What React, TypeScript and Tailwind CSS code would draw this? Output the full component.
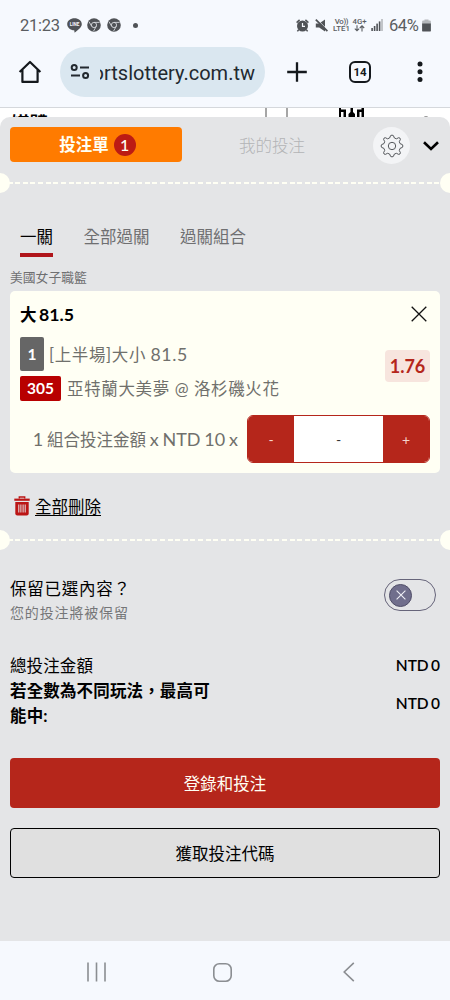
import React, { useState } from 'react';

const tabs = ['一關', '全部過關', '過關組合'];

// Dashed ticket tear line with a notch at each side
function TearLine() {
  return (
    <div className="relative h-5 flex items-center overflow-hidden">
      <div className="w-full h-[2.5px] bg-[repeating-linear-gradient(90deg,#fffff4_0px,#fffff4_5px,transparent_5px,transparent_7.62px)]" />
      <div className="absolute -left-[10px] top-0 size-5 rounded-full bg-[#fffff4]" />
      <div className="absolute -right-[10px] top-0 size-5 rounded-full bg-[#fffff4]" />
    </div>
  );
}

function ChromeIcon() {
  return (
    <svg width="14" height="14" viewBox="0 0 14 14" fill="none">
      <circle cx="7" cy="7" r="6.8" fill="#505357" />
      <circle cx="7" cy="7" r="2.6" stroke="#d5d8dc" strokeWidth="0.9" />
      <path d="M7 4.4H12.6M4.7 8.3L2 3.7M9.3 8.3L6.6 13" stroke="#d5d8dc" strokeWidth="0.9" />
    </svg>
  );
}

function StatusBar() {
  return (
    <div className="h-[47px] pt-[3px] pl-5 pr-[19px] flex items-center text-[#5a5d61] font-[Roboto,sans-serif]">
      <span className="text-[16.5px] w-[41px] mr-[6px] tracking-[-0.25px]">21:23</span>
      <svg className="mr-[5px]" width="15" height="15" viewBox="0 0 15 15">
        <path d="M7.5 0.3C11.5 0.3 14.8 2.9 14.8 6.2C14.8 9.4 10.5 12.3 7.8 14.6C7.3 14.9 7.6 13 7.2 12.3C3.3 12 0.2 9.4 0.2 6.2C0.2 2.9 3.5 0.3 7.5 0.3Z" fill="#505357" />
        <text x="7.5" y="8.1" textAnchor="middle" fontSize="4.6" fontWeight="bold" fontFamily="Roboto" fill="#f6f9fe">LINE</text>
      </svg>
      <ChromeIcon />
      <div className="w-[6px]" />
      <ChromeIcon />
      <div className="ml-[12px] size-[5px] rounded-full bg-[#505357]" />
      {/* right side */}
      <svg className="ml-auto mr-[6px]" width="13" height="13" viewBox="0 0 13 13" fill="none">
        <circle cx="6.5" cy="7" r="4.5" stroke="#505357" strokeWidth="2" fill="#505357" />
        <path d="M0.6 3.6L3.6 0.9M12.4 3.6L9.4 0.9M2.7 10.6L1.4 12.4M10.3 10.6L11.6 12.4" stroke="#505357" strokeWidth="1.5" />
        <path d="M6.5 4V7.3H9" stroke="#f6f9fe" strokeWidth="1.2" />
      </svg>
      <svg className="mr-[5px]" width="13" height="13" viewBox="0 0 13 13">
        <path d="M0.8 4.5H4.2L10 0.5V12.5L4.2 8.5H0.8Z" fill="#505357" />
        <path d="M1.8 0.2L12.8 11.2" stroke="#f6f9fe" strokeWidth="1" />
        <path d="M0.8 0.6L12.4 12.2" stroke="#505357" strokeWidth="1.7" />
      </svg>
      <div className="w-[17px] mr-[2px] text-[7.8px] leading-[7px] font-medium text-center whitespace-nowrap">
        <div className="tracking-[-0.3px]">Vo))</div>
        <div>LTE1</div>
      </div>
      <div className="w-[15px] mr-[4px] flex flex-col items-center text-[7.8px] leading-[7px] font-medium">
        <div>4G+</div>
        <svg width="11" height="7" viewBox="0 0 11 7" fill="none" stroke="#5a5d61" strokeWidth="1.1">
          <path d="M3 0.3V5.6M0.8 3.6L3 5.8L5.2 3.6M8 6.4V1M5.8 3L8 0.8L10.2 3" />
        </svg>
      </div>
      <svg className="mr-[6px]" width="12" height="12" viewBox="0 0 12 12" fill="#505357">
        <rect x="0.3" y="9" width="1.6" height="3" />
        <rect x="2.8" y="7" width="1.6" height="5" />
        <rect x="5.3" y="4.6" width="1.6" height="7.4" />
        <rect x="7.8" y="2.4" width="1.6" height="9.6" />
        <rect x="10.2" y="0" width="1.6" height="12" fill="#b5b8bc" />
      </svg>
      <span className="text-[16.5px] w-[31px] mr-[2px] tracking-[-0.4px]">64%</span>
      <svg width="9" height="13" viewBox="0 0 9 13">
        <path d="M2.5 0.4H6.5V1.6H7.8Q8.9 1.6 8.9 2.7V5H0.1V2.7Q0.1 1.6 1.2 1.6H2.5Z" fill="#b5b8bc" />
        <path d="M0.1 4.6H8.9V11.4Q8.9 12.6 7.7 12.6H1.3Q0.1 12.6 0.1 11.4Z" fill="#505357" />
      </svg>
    </div>
  );
}

function AddressBar() {
  return (
    <div className="h-[61px] flex items-start border-b border-[#d5d8dc]">
      <svg className="ml-[18px] mt-[13px]" width="24" height="24" viewBox="0 0 24 24" fill="none" stroke="#15191d" strokeWidth="2.2">
        <path d="M1.6 12L12 2L22.4 12M4.4 9.8V21.9H19.6V9.8" strokeLinejoin="round" />
      </svg>
      <div className="ml-[18px] w-[205px] h-[50px] rounded-full bg-[#dae7f0] flex items-center">
        <svg className="ml-[10px]" width="20" height="17" viewBox="0 0 20 17" fill="none" stroke="#22292f" strokeWidth="2">
          <circle cx="4.2" cy="3.5" r="2.5" />
          <path d="M10 3.5H19M1 11.6H10" />
          <circle cx="15.6" cy="11.6" r="2.5" />
        </svg>
        <div className="ml-[10px] w-[155px] pt-[3px] overflow-hidden flex justify-end text-[20px] text-[#22292f] font-[Roboto,sans-serif] whitespace-nowrap">
          <span>ortslottery.com.tw</span>
        </div>
      </div>
      <svg className="ml-[22px] mt-[15px]" width="20" height="20" viewBox="0 0 20 20" stroke="#15191d" strokeWidth="2.3">
        <path d="M10 0.2V19.8M0.2 10H19.8" />
      </svg>
      <div className="ml-[42px] mt-[14px] w-[22px] h-[22px] rounded-[6px] border-[2px] border-[#15191d] flex items-center justify-center text-[11.5px] leading-[18px] font-bold text-[#15191d] font-[Roboto,sans-serif]">14</div>
      <svg className="ml-[46px] mt-[14px]" width="6" height="22" viewBox="0 0 6 22" fill="#15191d">
        <circle cx="3" cy="3" r="2.5" />
        <circle cx="3" cy="10.7" r="2.5" />
        <circle cx="3" cy="18.4" r="2.5" />
      </svg>
    </div>
  );
}

export default function App() {
  const [activeTab, setActiveTab] = useState('一關');
  const [keep, setKeep] = useState(false);

  return (
    <div className="w-[450px] h-[1000px] overflow-hidden flex flex-col bg-[#f6f9fe] text-black text-[16.5px] leading-[25px] font-[Lato,'Noto_Sans_CJK_TC',sans-serif]">
      <StatusBar />
      <AddressBar />

      {/* Betslip over the page behind */}
      <div className="h-[833px] relative bg-white">
        <div className="h-[24px] overflow-hidden flex pl-[11px]">
          <span className="font-bold text-[18.5px] leading-[18px] pt-[6px]">媒體</span>
          <div className="ml-[217px] w-[23px] h-[16px] border-x-[2px] border-[#a6a6a6]" />
          <svg className="ml-[51px]" width="25" height="16" viewBox="0 0 25 16">
            <path d="M0 0H2V1.5H7V10H4.5V4H2V10H0ZM18 1.5H22.5V0H25V10H22.5V4H20.5V10H18ZM11.5 0H14V4L16 6V10H9.5V6L11.5 4Z" />
          </svg>
          <svg className="ml-[58px]" width="8" height="12" viewBox="0 0 8 12" fill="none" stroke="#222" strokeWidth="1.4">
            <path d="M1 10.2Q4 8 7 10.2" />
          </svg>
        </div>

        <div className="absolute inset-x-0 top-[9px] bottom-0 rounded-t-[10px] bg-[#e4e5e7]">
          {/* Header */}
          <div className="h-[56px] pt-[10px] px-[10px] flex items-start">
            <button className="w-[172px] h-[35px] rounded-[4px] bg-[#ff7b00] text-[#fffff4] font-bold flex items-center justify-center gap-[5px] pl-[3px]">
              <span className="pt-[2px]">投注單</span>
              <span className="size-[22px] rounded-full bg-[#bc1b14] text-[16px] leading-[22px] font-medium text-center">1</span>
            </button>
            <button className="ml-[57px] h-[36px] pt-[2px] text-[#b3b4b6] font-light">我的投注</button>
            <div className="ml-[68px] size-[37px] rounded-full bg-[#f3f4f6] flex items-center justify-center">
              <svg width="24" height="24" viewBox="0 0 24 24" fill="none" stroke="#55585c" strokeWidth="1">
                <circle cx="12" cy="12" r="3.7" />
                <path strokeLinejoin="round" d="M9.6 4L10.6 1.6Q12 0.6 13.4 1.6L14.4 4L16.4 4.8L18.7 3.7Q20.4 3.7 20.4 5.4L19.3 7.7L20 9.6L22.4 10.6Q23.4 12 22.4 13.4L20 14.4L19.3 16.4L20.4 18.7Q20.4 20.4 18.7 20.4L16.4 19.3L14.4 20L13.4 22.4Q12 23.4 10.6 22.4L9.6 20L7.6 19.3L5.3 20.4Q3.6 20.4 3.6 18.7L4.7 16.4L4 14.4L1.6 13.4Q0.6 12 1.6 10.6L4 9.6L4.7 7.7L3.6 5.4Q3.6 3.7 5.3 3.7L7.6 4.8Z" />
              </svg>
            </div>
            <svg className="ml-[13px] mt-[14px]" width="16" height="10" viewBox="0 0 16 10" fill="none" stroke="#000" strokeWidth="2.6">
              <path d="M1 1.2L8 8L15 1.2" />
            </svg>
          </div>
          <TearLine />

          {/* Tabs */}
          <div className="mt-[31px] pl-[20px] flex gap-[30.5px] h-[33px]">
            {tabs.map((tab) => (
              <button
                key={tab}
                onClick={() => setActiveTab(tab)}
                className={tab === activeTab
                  ? 'border-b-[4px] border-[#b0151b] pt-px flex items-start'
                  : 'text-[#6f6f71] pt-px flex items-start'}
              >{tab}</button>
            ))}
          </div>

          <div className="px-[10px]">
            <div className="mt-[10px] h-[24px] text-[12.8px] leading-[21px] text-[#6f6f71]">美國女子職籃</div>

            {/* Bet card */}
            <div className="h-[182px] rounded-[5px] bg-[#fffff4] px-[10px] text-[#70706c]">
              <div className="h-[46px] flex items-center justify-between text-black font-bold">
                <span className="pt-[2px] text-[16.5px] [word-spacing:-1.5px]">大 <span className="text-[17.7px]">81.5</span></span>
                <svg className="mr-[3px]" width="16" height="16" viewBox="0 0 16 16" stroke="#111" strokeWidth="1.3">
                  <path d="M0.7 0.7L15.3 15.3M15.3 0.7L0.7 15.3" />
                </svg>
              </div>
              <div className="flex justify-between">
                <div className="tracking-[0.63px]">
                  <div className="h-[34px] flex items-center">
                    <span className="w-[24px] h-[34px] rounded-[2px] bg-[#666] text-white font-bold text-[15.5px] tracking-normal flex items-center justify-center mr-[5px]">1</span>
                    <span className="pt-[2px] [word-spacing:-0.5px]">[上半場]大小 <span className="text-[17.7px]">81.5</span></span>
                  </div>
                  <div className="h-[25px] mt-[5px] flex items-center">
                    <span className="w-[41px] h-[25px] rounded-[2px] bg-[#b80000] text-white font-bold text-[15.5px] tracking-normal flex items-center justify-center mr-[6px]">305</span>
                    <span className="pt-[2px]">亞特蘭大美夢 @ 洛杉磯火花</span>
                  </div>
                </div>
                <span className="mt-[13px] w-[45px] h-[32px] rounded-[4px] bg-[#f7e5de] text-[#b5261b] text-[18px] font-bold flex items-center justify-center">1.76</span>
              </div>
              <div className="mt-[14px] flex items-center justify-end">
                <span className="mr-[9px] pt-[1px] text-[18px] [word-spacing:-0.8px]">1 <span className="text-[16.5px]">組合投注金額</span> x NTD 10 x</span>
                <div className="w-[183px] h-[48px] rounded-[6px] border border-[#b5261b] bg-white flex overflow-hidden text-[14px]">
                  <button className="w-[46px] bg-[#b5261b] text-[#f5d5cc]">-</button>
                  <div className="flex-1 flex items-center justify-center text-[#333]">-</div>
                  <button className="w-[46px] bg-[#b5261b] text-[#f5d5cc]">+</button>
                </div>
              </div>
            </div>

            {/* Delete all */}
            <div className="mt-[19px] h-[28px] pl-[4px] flex items-center">
              <svg width="16" height="20" viewBox="0 0 16 20" fill="none">
                <path d="M5.3 2.6V1H10.7V2.6" stroke="#bb1515" strokeWidth="1.4" />
                <path d="M0.3 2.6H15.7V4.8H0.3Z" fill="#bb1515" />
                <path d="M1.3 6H14.7V17.5Q14.7 19.6 12.7 19.6H3.3Q1.3 19.6 1.3 17.5Z" fill="#bb1515" />
                <path d="M4.8 8.5V16.5M6.9 8.5V16.5M9.1 8.5V16.5M11.2 8.5V16.5" stroke="#e4e5e7" strokeWidth="1" />
              </svg>
              <span className="ml-[5px] mt-[3px] underline underline-offset-[2px] decoration-[1.3px]">全部刪除</span>
            </div>
          </div>
          <div className="mt-[10px]"><TearLine /></div>

          <div className="px-[10px]">
            {/* Keep selection */}
            <div className="mt-[26px] flex justify-between">
              <div className="pt-px">
                <div className="tracking-[0.75px]">保留已選內容？</div>
                <div className="-mt-px text-[14px] leading-[23px] tracking-[0.85px] text-[#757678]">您的投注將被保留</div>
              </div>
              <button
                onClick={() => setKeep(!keep)}
                className={keep
                  ? 'mt-[3px] mr-[4px] w-[52px] h-[32px] rounded-full border border-[#66647a] flex items-center justify-end pr-[4px]'
                  : 'mt-[3px] mr-[4px] w-[52px] h-[32px] rounded-full border border-[#66647a] flex items-center pl-[4px]'}
              >
                <span className="size-[23px] rounded-full bg-[#706e8c] border border-[#504e68] flex items-center justify-center">
                  <svg width="10" height="10" viewBox="0 0 10 10" stroke="#f0f0f6" strokeWidth="1.1">
                    <path d="M0.6 0.6L9.4 9.4M9.4 0.6L0.6 9.4" />
                  </svg>
                </span>
              </button>
            </div>

            {/* Totals */}
            <div className="mt-[30px] flex justify-between items-center">
              <span className="tracking-[0.1px]">總投注金額</span>
              <span className="-mt-[2px] text-[15.5px] font-semibold [word-spacing:-1.5px]">NTD 0</span>
            </div>
            <div className="flex justify-between items-center font-bold">
              <span className="w-[205px] tracking-[0.15px]">若全數為不同玩法，最高可能中:</span>
              <span className="-mt-[2px] text-[15.5px] font-semibold [word-spacing:-1.5px]">NTD 0</span>
            </div>

            <button className="mt-[29px] w-full h-[50px] rounded-[4px] bg-[#b5261b] text-[#fffff4] pt-[2px]">登錄和投注</button>
            <button className="mt-[20px] w-full h-[50px] rounded-[4px] border border-black bg-[#e0e0e0] pt-[2px]">獲取投注代碼</button>
          </div>
        </div>
      </div>

      {/* Android navigation */}
      <div className="h-[59px] flex items-center text-[#8b8e92]">
        <svg className="ml-[87px] mt-[3px]" width="19" height="20" viewBox="0 0 19 20" stroke="currentColor" strokeWidth="1.6">
          <path d="M1 0.5V19.5M9.5 0.5V19.5M18 0.5V19.5" />
        </svg>
        <svg className="ml-[107px] mt-[3px]" width="19" height="19" viewBox="0 0 19 19" fill="none" stroke="currentColor" strokeWidth="1.6">
          <rect x="0.8" y="0.8" width="17.4" height="17.4" rx="5.5" />
        </svg>
        <svg className="ml-[111px] mt-[3px]" width="12" height="20" viewBox="0 0 12 20" fill="none" stroke="currentColor" strokeWidth="1.6">
          <path d="M10.8 0.8L1.2 10L10.8 19.2" />
        </svg>
      </div>
    </div>
  );
}
